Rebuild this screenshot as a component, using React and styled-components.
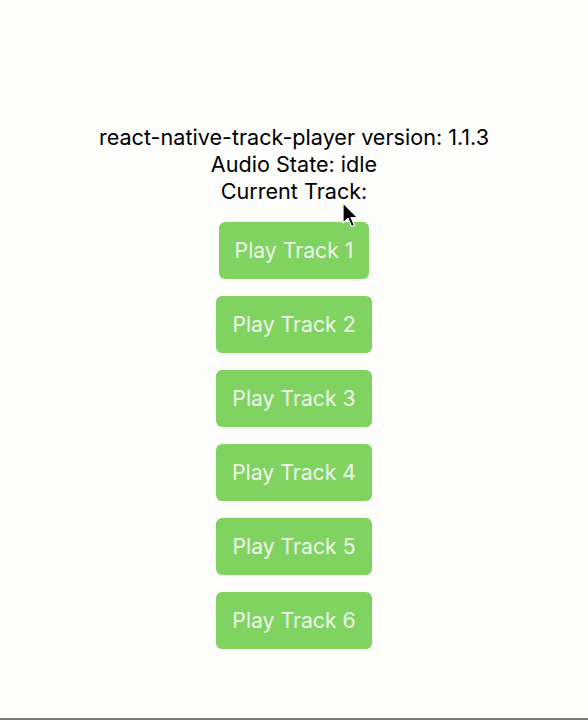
import React from "react";
import styled, { createGlobalStyle } from "styled-components";

const GlobalStyle = createGlobalStyle`
  html, body {
    margin: 0;
    padding: 0;
    background: #fdfdfb;
  }
  body {
    font-family: Inter, "Liberation Sans", sans-serif;
  }
`;

const Screen = styled.div`
  position: relative;
  height: 720px;
  box-sizing: border-box;
  border-bottom: 2px solid #7a7a78;
  display: flex;
  flex-direction: column;
  align-items: center;
  padding-top: 124px;
  overflow: hidden;
`;

const Info = styled.div`
  display: flex;
  flex-direction: column;
  align-items: center;
  margin-bottom: 17px;
`;

const InfoLine = styled.div`
  font-size: 21.6px;
  line-height: 27px;
  color: #000;
`;

const TrackButton = styled.button`
  display: block;
  border: none;
  background: #80d361;
  color: #eef7ea;
  font-family: inherit;
  font-size: 21.2px;
  line-height: 24px;
  padding: 16px 16px 17px;
  border-radius: 6px;
  margin-bottom: 17px;
  cursor: pointer;
`;

const Cursor = styled.svg`
  position: absolute;
  left: 342px;
  top: 202px;
`;

const tracks = [1, 2, 3, 4, 5, 6];

export default function App() {
  return (
    <>
      <GlobalStyle />
      <Screen>
        <Info>
          <InfoLine>react-native-track-player version: 1.1.3</InfoLine>
          <InfoLine>Audio State: idle</InfoLine>
          <InfoLine>Current Track:</InfoLine>
        </Info>
        {tracks.map((n) => (
          <TrackButton key={n}>Play Track {n}</TrackButton>
        ))}
        <Cursor width="18" height="28" viewBox="0 0 18 28">
          <path
            d="M1 1 L1 21 L6 16.5 L9.5 24.5 L12.5 23.2 L9 15.5 L15.5 15.5 Z"
            fill="#000"
            stroke="#fff"
            strokeWidth="1.2"
            strokeLinejoin="round"
          />
        </Cursor>
      </Screen>
    </>
  );
}
